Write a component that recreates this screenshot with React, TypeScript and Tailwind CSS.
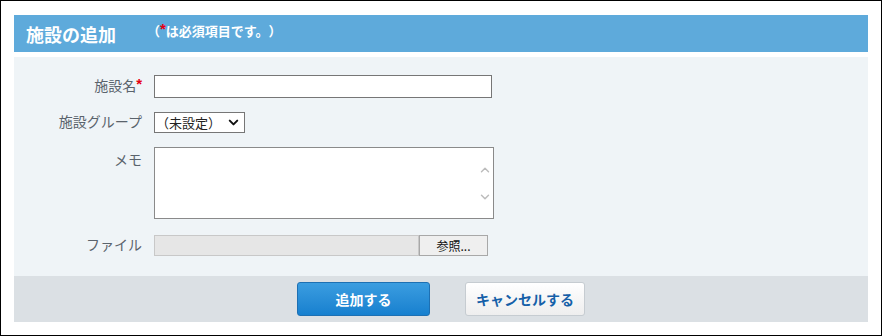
import React from 'react';
import { ChevronDown, ChevronUp } from 'lucide-react';

const font = { fontFamily: '"Noto Sans CJK JP", "Noto Sans", sans-serif' };

function Required() {
  return (
    <span className="font-['Liberation_Sans',sans-serif] text-[#e60012] text-[15px] font-bold leading-none relative -top-[2px]">
      *
    </span>
  );
}

export default function App() {
  return (
    <div style={font} className="w-[882px] h-[336px] border border-black bg-white px-[13px] pt-[14px] [text-spacing-trim:space-all]">
      {/* Header */}
      <div className="h-[37px] bg-[#5eaadb] flex items-center pl-[12px]">
        <h2 className="text-[18px] font-bold text-white leading-none">施設の追加</h2>
        <span className="ml-[31px] -mt-[6px] text-[13px] font-bold text-white leading-none">
          （<Required />は必須項目です。）
        </span>
      </div>

      {/* Form */}
      <div className="mt-[5px] h-[219px] bg-[#eff4f7] pt-[18px]">
        <div className="flex items-center">
          <label className="w-[128px] -mt-[3px] text-right text-[14px] text-[#5a636c] leading-none">
            施設名<Required />
          </label>
          <input type="text" className="ml-[12px] w-[338px] h-[23px] border border-[#767676] bg-white outline-none" />
        </div>

        <div className="flex items-center mt-[14px]">
          <label className="w-[128px] -mt-[3px] text-right text-[14px] text-[#5a636c] leading-none">施設グループ</label>
          <div className="ml-[12px] w-[91px] h-[21px] border border-[#767676] bg-white flex items-center pl-[1px] pr-[3px]">
            <span className="text-[13px] text-[#222] leading-none flex-1">（未設定）</span>
            <ChevronDown className="w-[15px] h-[15px] text-[#111]" strokeWidth={3.2} />
          </div>
        </div>

        <div className="flex items-start mt-[14px]">
          <label className="w-[128px] text-right text-[14px] text-[#5a636c] leading-none mt-[5px]">メモ</label>
          <div className="relative ml-[12px] w-[340px] h-[72px] border border-[#8a8a8a] bg-white">
            <div className="absolute right-0 top-0 bottom-0 w-[17px] flex flex-col items-center justify-center gap-[13px]">
              <ChevronUp className="w-[14px] h-[14px] text-[#bcbcbc]" strokeWidth={2.5} />
              <ChevronDown className="w-[14px] h-[14px] text-[#bcbcbc]" strokeWidth={2.5} />
            </div>
          </div>
        </div>

        <div className="flex items-center mt-[16px]">
          <label className="w-[128px] -mt-[3px] text-right text-[14px] text-[#5a636c] leading-none">ファイル</label>
          <div className="ml-[12px] flex h-[21px]">
            <div className="w-[265px] h-full bg-[#e6e6e6] border border-[#c8c8c8]" />
            <div className="w-[69px] h-full bg-[#efefef] border border-[#a8a8a8] flex items-center justify-center text-[12px] text-[#111] leading-none">
              参照...
            </div>
          </div>
        </div>
      </div>

      {/* Footer */}
      <div className="h-[46px] bg-[#dbe0e4] flex items-center justify-center gap-[35px]">
        <button className="w-[133px] h-[34px] rounded-[3px] border border-[#1d70b3] bg-gradient-to-b from-[#3a9de0] to-[#1680cf] text-white text-[14px] font-bold leading-none">
          追加する
        </button>
        <button className="w-[120px] h-[34px] rounded-[3px] border border-[#c6ccd1] bg-gradient-to-b from-white to-[#eeeeee] text-[#1560a8] text-[14px] font-bold leading-none">
          キャンセルする
        </button>
      </div>
    </div>
  );
}
